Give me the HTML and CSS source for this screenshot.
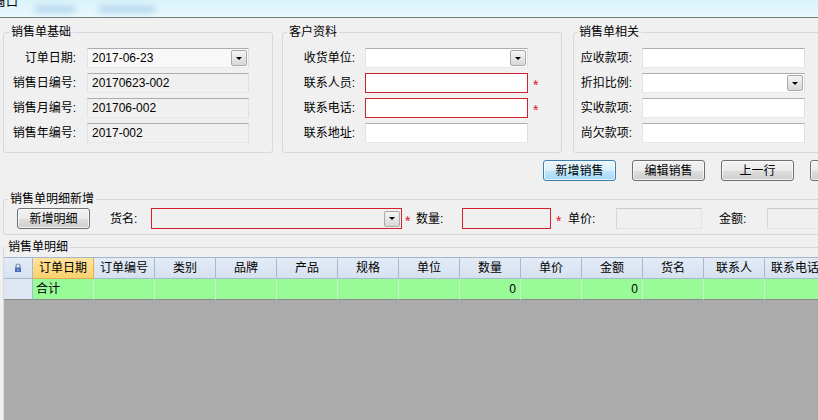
FILE: index.html
```html
<!DOCTYPE html>
<html lang="zh-CN">
<head>
    <meta charset="UTF-8">
    <meta name="viewport" content="width=device-width, initial-scale=1.0">
    <link rel="stylesheet" href="styles.css">
    <title>销售单</title>
</head>
<body>
    <div class="titlebar">
        <span class="titlebar__text">窗口</span>
        <span class="titlebar__blur titlebar__blur--a"></span>
        <span class="titlebar__blur titlebar__blur--b"></span>
    </div>

    <div class="top">
        <fieldset class="group group--base">
            <legend>销售单基础</legend>
            <div class="fields fields--base">
                <label>订单日期:</label>
                <div class="box box--date"><span>2017-06-23</span><i class="drop"></i></div>
                <label>销售日编号:</label>
                <div class="box box--readonly">20170623-002</div>
                <label>销售月编号:</label>
                <div class="box box--readonly">201706-002</div>
                <label>销售年编号:</label>
                <div class="box box--readonly">2017-002</div>
            </div>
        </fieldset>

        <fieldset class="group group--customer">
            <legend>客户资料</legend>
            <div class="fields fields--customer">
                <label>收货单位:</label>
                <div class="box"><i class="drop"></i></div>
                <span></span>
                <label>联系人员:</label>
                <div class="box box--required"></div>
                <span class="req">*</span>
                <label>联系电话:</label>
                <div class="box box--required"></div>
                <span class="req">*</span>
                <label>联系地址:</label>
                <div class="box"></div>
                <span></span>
            </div>
        </fieldset>

        <fieldset class="group group--money">
            <legend>销售单相关</legend>
            <div class="fields fields--money">
                <label>应收款项:</label>
                <div class="box"></div>
                <label>折扣比例:</label>
                <div class="box"><i class="drop"></i></div>
                <label>实收款项:</label>
                <div class="box"></div>
                <label>尚欠款项:</label>
                <div class="box"></div>
            </div>
        </fieldset>
    </div>

    <div class="actions">
        <button class="btn btn--default">新增销售</button>
        <button class="btn">编辑销售</button>
        <button class="btn">上一行</button>
        <button class="btn">下一行</button>
    </div>

    <fieldset class="group detail-add">
        <legend>销售单明细新增</legend>
        <div class="detail-add__row">
            <button class="btn">新增明细</button>
            <label class="lbl lbl--name">货名:</label>
            <div class="box box--required box--readonly box--goods"><i class="drop"></i></div>
            <span class="req req--goods">*</span>
            <label class="lbl lbl--qty">数量:</label>
            <div class="box box--required box--readonly box--qty"></div>
            <span class="req req--qty">*</span>
            <label class="lbl lbl--price">单价:</label>
            <div class="box box--readonly box--price"></div>
            <label class="lbl lbl--amount">金额:</label>
            <div class="box box--readonly box--amount"></div>
        </div>
    </fieldset>

    <fieldset class="group detail-list">
        <legend>销售单明细</legend>
        <div class="grid">
            <div class="grid__head">
                <div class="grid__corner">
                    <svg width="8" height="10" viewBox="0 0 8 10">
                        <path d="M2 4.5V3a2 2 0 0 1 4 0v1.5" fill="none" stroke="#7488a8" stroke-width="1.2"/>
                        <rect x="1" y="4.5" width="6" height="4.5" fill="#4a6cb4"/>
                        <rect x="3.5" y="6" width="1" height="2" fill="#b9c9ea"/>
                    </svg>
                </div>
                <div class="grid__th grid__th--active">订单日期</div>
                <div class="grid__th">订单编号</div>
                <div class="grid__th">类别</div>
                <div class="grid__th">品牌</div>
                <div class="grid__th">产品</div>
                <div class="grid__th">规格</div>
                <div class="grid__th">单位</div>
                <div class="grid__th">数量</div>
                <div class="grid__th">单价</div>
                <div class="grid__th">金额</div>
                <div class="grid__th">货名</div>
                <div class="grid__th">联系人</div>
                <div class="grid__th">联系电话</div>
            </div>
            <div class="grid__row">
                <div class="grid__rowhead"></div>
                <div class="grid__td">合计</div>
                <div class="grid__td"></div>
                <div class="grid__td"></div>
                <div class="grid__td"></div>
                <div class="grid__td"></div>
                <div class="grid__td"></div>
                <div class="grid__td"></div>
                <div class="grid__td grid__td--num">0</div>
                <div class="grid__td"></div>
                <div class="grid__td grid__td--num">0</div>
                <div class="grid__td"></div>
                <div class="grid__td"></div>
                <div class="grid__td"></div>
            </div>
            <div class="grid__empty"></div>
        </div>
    </fieldset>
</body>
</html>
```

FILE: styles.css
```css
*{box-sizing: border-box;}

html, body{margin: 0; height: 100%;}
body{background: #f0f0f0; color: #000; font: 12px/14px "Liberation Sans", "Noto Sans CJK SC", sans-serif; overflow: hidden;}

/* title strip (cut off window caption) */
.titlebar{height: 18px; border-bottom: 1px solid #7b7b7b; background: linear-gradient(#d9f3fb, #eaf9fd); display: flex; align-items: flex-start; overflow: hidden;}
.titlebar__text{margin: -5px 0 0 -6px; white-space: nowrap;}
.titlebar__blur{height: 7px; margin-top: 6px; border-radius: 4px; background: #b5d6ee; filter: blur(3px);}
.titlebar__blur--a{width: 42px; margin-left: 16px;}
.titlebar__blur--b{width: 58px; margin-left: 22px;}

/* group boxes */
.group{margin: 0; padding: 0; min-width: 0; border: 1px solid #d5d9dd; border-radius: 3px;}
.group legend{padding: 0 2px; line-height: 14px;}

.top{display: flex; align-items: flex-start; margin: 7px 0 0 3px;}
.group--base{width: 270px; flex-shrink: 0;}
.group--base legend{margin-left: 5px;}
.group--customer{width: 280px; margin-left: 9px; flex-shrink: 0;}
.group--customer legend{margin-left: 4px;}
.group--money{width: 260px; margin-left: 11px; flex-shrink: 0;}
.group--money legend{margin-left: 3px;}

.fields{display: grid; grid-auto-rows: 20px; row-gap: 5px; align-items: center;}
.fields label{text-align: right; white-space: nowrap;}
.fields--base{grid-template-columns: 76px 162px; padding: 9px 0 9px 7px;}
.fields--base label{padding-right: 11px;}
.fields--customer{grid-template-columns: 76px 163px 14px; padding: 9px 0 9px 6px;}
.fields--customer label{padding-right: 10px;}
.fields--money{grid-template-columns: 64px 163px; padding: 9px 0 9px 4px;}
.fields--money label{padding-right: 10px;}

/* text / combo boxes */
.box{height: 20px; display: flex; align-items: center; padding: 0 1px 0 4px; white-space: nowrap; overflow: hidden; background: #fff; border: 1px solid; border-color: #abadb3 #dbdfe6 #e3e9ef #e2e3ea;}
.box--readonly{background: #f0f0f0;}
.box--date{background: #f8f8f8;}
.box--required{border-color: #d3202e;}
.drop{margin-left: auto; width: 16px; height: 16px; flex-shrink: 0; display: flex; align-items: center; justify-content: center; border: 1px solid #a9a9a9; border-radius: 2px; background: linear-gradient(#f5f5f5, #e6e6e6 50%, #d8d8d8);}
.drop::after{content: ""; border-left: 3px solid transparent; border-right: 3px solid transparent; border-top: 3px solid #000;}

.req{color: #e0102a; font-size: 14px; line-height: 14px; padding: 4px 0 0 5px; align-self: center;}

/* buttons */
.actions{display: flex; gap: 16px; margin: 7px 0 0 543px;}
.btn{width: 73px; height: 21px; flex-shrink: 0; padding: 0; font: inherit; color: #000; border: 1px solid #707070; border-radius: 3px; background: linear-gradient(#f2f2f2, #ebebeb 50%, #dddddd 51%, #cfcfcf); box-shadow: inset 0 0 0 1px rgba(255,255,255,0.7);}
.btn--default{border-color: #3c7fb1; background: linear-gradient(#eaf6fd, #d9f0fc 50%, #bee6fd 51%, #a7d9f5);}

/* detail add */
.detail-add{margin: 11px 0 0 3px; width: 830px;}
.detail-add legend{margin-left: 4px;}
.detail-add__row{display: flex; align-items: center; height: 21px; padding-left: 13px; margin: 2px 0 5px;}
.detail-add__row > *{flex-shrink: 0;}
.detail-add__row .box{height: 21px;}
.lbl{white-space: nowrap;}
.lbl--name{margin-left: 20px; width: 41px;}
.box--goods{width: 251px;}
.req--goods{width: 14px; padding-left: 3px;}
.lbl--qty{width: 46px;}
.box--qty{width: 89px;}
.req--qty{width: 17px; padding-left: 5px;}
.lbl--price{width: 48px;}
.box--price{width: 86px; border-color: #c9c9c9 #e3e3e3 #e3e3e3 #d6d6d6;}
.lbl--amount{margin-left: 17px; width: 48px;}
.box--amount{width: 100px; border-color: #c9c9c9 #e3e3e3 #e3e3e3 #d6d6d6;}

/* detail grid */
.detail-list{margin: 5px 0 0 3px; width: 830px; height: 200px; border-bottom: 0;}
.detail-list legend{margin-left: 2px;}
.grid{margin-top: 3px;}
.grid__head, .grid__row{display: grid; grid-template-columns: 29px repeat(13, 61px);}
.grid__head{height: 22px; border-top: 1px solid #a3b6cd;}
.grid__corner, .grid__th{display: flex; align-items: center; justify-content: center; white-space: nowrap; background: linear-gradient(#e3ebf6, #d6e1f0); border-right: 1px solid #a6b9d0; border-bottom: 1px solid #a6b9d0;}
.grid__th--active{background: linear-gradient(#ffe39c, #fbd16f); border-right-color: #e0b04f; border-bottom-color: #e0b04f;}
.grid__row{height: 21px;}
.grid__rowhead{background: #dde6f2; border-right: 1px solid #a6b9d0; border-bottom: 1px solid #8a8a8a;}
.grid__td{display: flex; align-items: center; padding: 0 4px 0 3px; background: #98fb98; border-right: 1px solid #cdf3cd; border-bottom: 1px solid #8a8a8a; white-space: nowrap;}
.grid__td--num{justify-content: flex-end;}
.grid__empty{height: 160px; background: #ababab;}
```
